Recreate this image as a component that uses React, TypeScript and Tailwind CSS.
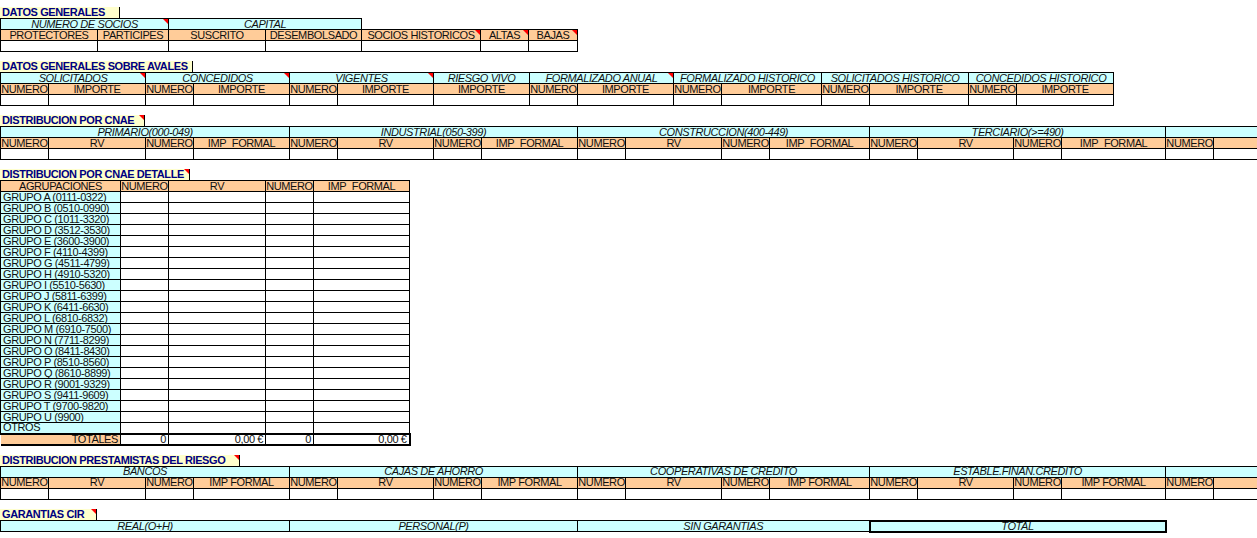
import React from "react";

type CellDef = { t?: string; span?: number; bg?: "c" | "o" | "w"; it?: boolean; tri?: boolean; al?: "l" | "r" | "c"; cls?: string };

const bgMap = { c: "bg-[#ccffff]", o: "bg-[#ffcc99]", w: "bg-white" };

function Row({ cells, h = "h-[11px]" }: { cells: CellDef[]; h?: string }) {
  return (
    <tr className={h}>
      {cells.map((c, i) => (
        <td
          key={i}
          colSpan={c.span}
          className={`relative border border-black p-0 leading-[9px] whitespace-nowrap overflow-hidden ${bgMap[c.bg || "w"]} ${c.it ? "italic" : ""} ${c.al === "l" ? "text-left pl-[2px]" : c.al === "r" ? "text-right pr-[2px]" : "text-center"} ${c.cls || ""}`}
        >
          {c.t}
          {c.tri && <span className="absolute right-0 top-0 w-0 h-0 border-l-[5px] border-l-transparent border-t-[5px] border-t-[#ff0000]" />}
        </td>
      ))}
    </tr>
  );
}

function Table({ cols, children }: { cols: number[]; children: React.ReactNode }) {
  const total = cols.reduce((a, b) => a + b, 0);
  return (
    <table className="table-fixed border-collapse" style={{ width: total }}>
      <colgroup>
        {cols.map((w, i) => (
          <col key={i} style={{ width: w }} />
        ))}
      </colgroup>
      <tbody>{children}</tbody>
    </table>
  );
}

function Title({ t, w, tri }: { t: string; w: number; tri?: boolean }) {
  return (
    <div className="relative h-[11px] bg-[#ffffcc] border-r border-black text-[#000080] font-bold leading-[11px] pl-[2px] whitespace-nowrap" style={{ width: w }}>
      {t}
      {tri && <span className="absolute right-0 top-0 w-0 h-0 border-l-[5px] border-l-transparent border-t-[5px] border-t-[#ff0000]" />}
    </div>
  );
}

const empty = (n: number): CellDef[] => Array.from({ length: n }, () => ({ t: "" }));

export default function App() {
  const avCols = [48, 97, 48, 96, 48, 96, 96, 48, 96, 48, 100, 48, 99, 48, 97];
  const grpCols = [48, 97, 48, 96, 48, 96, 48, 96, 48, 96, 48, 100, 48, 96, 48, 104, 48, 96, 48, 96];
  const sub4 = (a: string, b: string): CellDef[] => [
    { t: "NUMERO", bg: "o" }, { t: a, bg: "o" }, { t: "NUMERO", bg: "o" }, { t: b, bg: "o" },
  ];
  const lastSub: CellDef[] = [{ t: "NUMERO", bg: "o" }, { t: "", bg: "o" }, { t: "", bg: "o" }, { t: "", bg: "o" }];
  const grupos = [
    "GRUPO A (0111-0322)", "GRUPO B (0510-0990)", "GRUPO C (1011-3320)", "GRUPO D (3512-3530)",
    "GRUPO E (3600-3900)", "GRUPO F (4110-4399)", "GRUPO G (4511-4799)", "GRUPO H (4910-5320)",
    "GRUPO I (5510-5630)", "GRUPO J (5811-6399)", "GRUPO K (6411-6630)", "GRUPO L (6810-6832)",
    "GRUPO M (6910-7500)", "GRUPO N (7711-8299)", "GRUPO O (8411-8430)", "GRUPO P (8510-8560)",
    "GRUPO Q (8610-8899)", "GRUPO R (9001-9329)", "GRUPO S (9411-9609)", "GRUPO T (9700-9820)",
    "GRUPO U (9900)", "OTROS",
  ];
  return (
    <div className="w-[1257px] h-[538px] overflow-hidden bg-white text-[11px] text-[#111] tracking-[-0.4px]" style={{ fontFamily: '"Liberation Sans", Arial, sans-serif' }}>
      <div className="pt-[7px]">
        <Title t="DATOS GENERALES" w={120} />
        <Table cols={[97, 71, 97, 96, 119, 48, 49]}>
          <Row cells={[{ t: "NUMERO DE SOCIOS", span: 2, bg: "c", it: true, tri: true }, { t: "CAPITAL", span: 2, bg: "c", it: true }, { t: "", span: 3, cls: "!border-0 !bg-white" }]} />
          <Row cells={[
            { t: "PROTECTORES", bg: "o" }, { t: "PARTICIPES", bg: "o" }, { t: "SUSCRITO", bg: "o" }, { t: "DESEMBOLSADO", bg: "o" },
            { t: "SOCIOS HISTORICOS", bg: "o", tri: true }, { t: "ALTAS", bg: "o", tri: true }, { t: "BAJAS", bg: "o", tri: true },
          ]} />
          <Row cells={empty(7)} />
        </Table>
      </div>

      <div className="pt-[9px]">
        <Title t="DATOS GENERALES SOBRE AVALES" w={193} />
        <Table cols={avCols}>
          <Row cells={[
            { t: "SOLICITADOS", span: 2, bg: "c", it: true, tri: true },
            { t: "CONCEDIDOS", span: 2, bg: "c", it: true, tri: true },
            { t: "VIGENTES", span: 2, bg: "c", it: true, tri: true },
            { t: "RIESGO VIVO", bg: "c", it: true },
            { t: "FORMALIZADO ANUAL", span: 2, bg: "c", it: true, tri: true },
            { t: "FORMALIZADO HISTORICO", span: 2, bg: "c", it: true },
            { t: "SOLICITADOS HISTORICO", span: 2, bg: "c", it: true },
            { t: "CONCEDIDOS HISTORICO", span: 2, bg: "c", it: true },
          ]} />
          <Row cells={[
            ...sub4("IMPORTE", "IMPORTE"), { t: "NUMERO", bg: "o" }, { t: "IMPORTE", bg: "o" }, { t: "IMPORTE", bg: "o" },
            ...sub4("IMPORTE", "IMPORTE"), ...sub4("IMPORTE", "IMPORTE"),
          ]} />
          <Row cells={empty(15)} />
        </Table>
      </div>

      <div className="pt-[9px]">
        <Title t="DISTRIBUCION POR CNAE" w={145} tri />
        <Table cols={grpCols}>
          <Row cells={["PRIMARIO(000-049)", "INDUSTRIAL(050-399)", "CONSTRUCCION(400-449)", "TERCIARIO(>=490)", ""].map((t) => ({ t, span: 4, bg: "c" as const, it: true }))} />
          <Row cells={[...[0, 1, 2, 3].flatMap(() => sub4("RV", "IMP_FORMAL")), ...lastSub]} />
          <Row cells={empty(20)} />
        </Table>
      </div>

      <div className="pt-[9px]">
        <Title t="DISTRIBUCION POR CNAE DETALLE" w={190} tri />
        <Table cols={[120, 48, 97, 48, 96]}>
          <Row cells={[{ t: "AGRUPACIONES", bg: "o" }, ...sub4("RV", "IMP_FORMAL")]} />
          {grupos.map((g) => (
            <Row key={g} cells={[{ t: g, bg: "c", al: "l" }, ...empty(4)]} />
          ))}
          <Row
            cells={[
              { t: "TOTALES", bg: "o", al: "r", cls: "!border-t-2 !border-b-2 !border-l-0" },
              { t: "0", al: "r", cls: "!border-t-2 !border-b-2" },
              { t: "0,00 €", al: "r", cls: "!border-t-2 !border-b-2" },
              { t: "0", al: "r", cls: "!border-t-2 !border-b-2" },
              { t: "0,00 €", al: "r", cls: "!border-t-2 !border-b-2 !border-r-2" },
            ]}
          />
        </Table>
      </div>

      <div className="pt-[9px]">
        <Title t="DISTRIBUCION PRESTAMISTAS DEL RIESGO" w={240} tri />
        <Table cols={grpCols}>
          <Row cells={["BANCOS", "CAJAS DE AHORRO", "COOPERATIVAS DE CREDITO", "ESTABLE.FINAN.CREDITO", ""].map((t) => ({ t, span: 4, bg: "c" as const, it: true }))} />
          <Row cells={[...[0, 1, 2, 3].flatMap(() => sub4("RV", "IMP FORMAL")), ...lastSub]} />
          <Row cells={empty(20)} />
        </Table>
      </div>

      <div className="pt-[9px]">
        <Title t="GARANTIAS CIR" w={97} tri />
        <Table cols={[289, 288, 292, 296]}>
          <Row cells={[
            { t: "REAL(O+H)", bg: "c", it: true },
            { t: "PERSONAL(P)", bg: "c", it: true },
            { t: "SIN GARANTIAS", bg: "c", it: true },
            { t: "TOTAL", bg: "c", it: true, cls: "!border-2" },
          ]} />
        </Table>
      </div>
    </div>
  );
}
